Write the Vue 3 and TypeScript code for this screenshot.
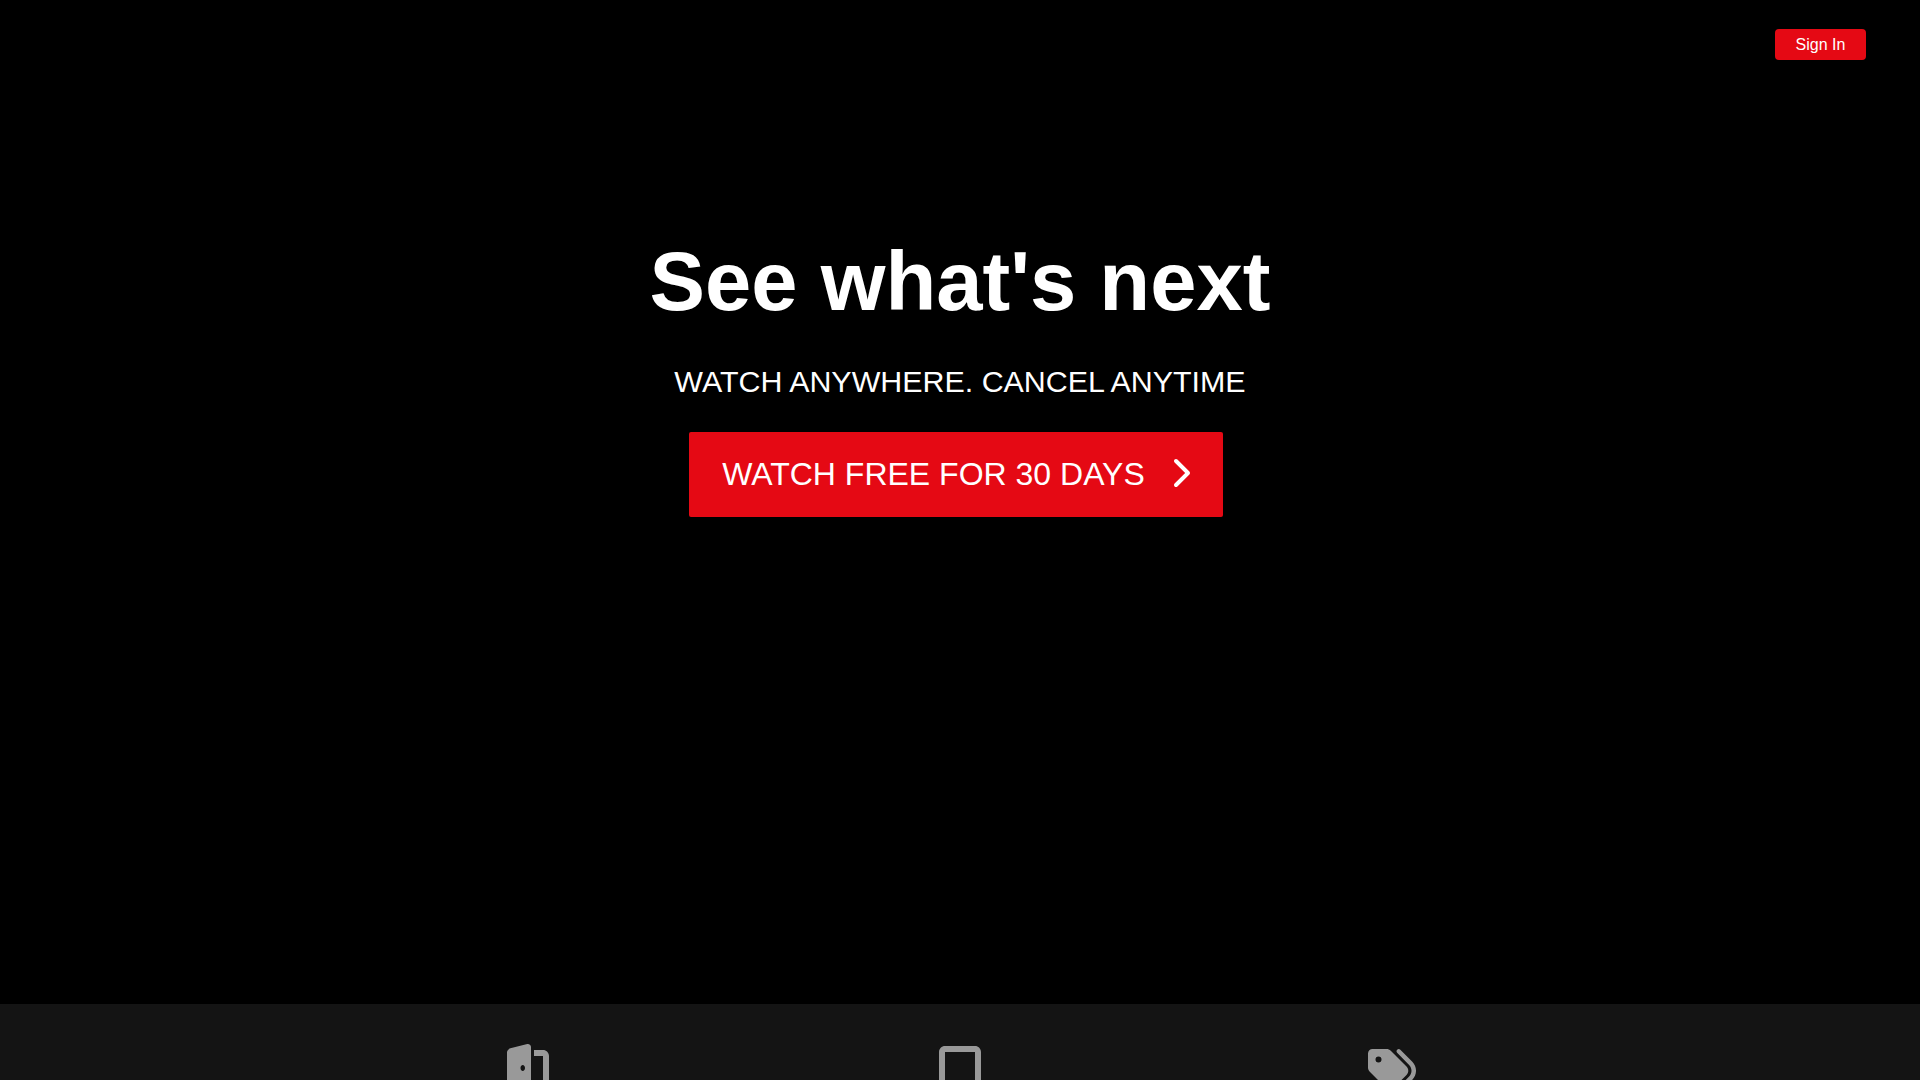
<template>
  <div class="page">
    <section class="showcase">
      <header class="topbar">
        <a class="btn-signin" href="#">Sign In</a>
      </header>
      <div class="hero">
        <h1 class="hero__title">See what's next</h1>
        <p class="hero__sub">WATCH ANYWHERE. CANCEL ANYTIME</p>
        <a class="btn-cta" href="#">
          WATCH FREE FOR 30 DAYS
          <svg class="btn-cta__icon" xmlns="http://www.w3.org/2000/svg" viewBox="0 0 320 512">
            <path fill="currentColor" d="M310.6 233.4c12.5 12.5 12.5 32.8 0 45.3l-192 192c-12.5 12.5-32.8 12.5-45.3 0s-12.5-32.8 0-45.3L242.7 256 73.4 86.6c-12.5-12.5-12.5-32.8 0-45.3s32.8-12.5 45.3 0l192 192z" />
          </svg>
        </a>
      </div>
    </section>

    <section class="tabs">
      <div class="tabs__row">
        <div v-for="tab in tabs" :key="tab.id" class="tabs__item">
          <svg class="tabs__icon" :class="`tabs__icon--${tab.id}`" xmlns="http://www.w3.org/2000/svg" :viewBox="tab.viewBox">
            <path fill="currentColor" :d="tab.path" />
          </svg>
        </div>
      </div>
    </section>
  </div>
</template>

<script setup lang="ts">
const tabs = [
  {
    id: 'door',
    viewBox: '0 0 576 512',
    path: 'M320 32c0-9.9-4.5-19.2-12.3-25.2S289.8-1.4 280.2 1l-179.9 45C79 51.3 64 70.5 64 92.5V448H32c-17.7 0-32 14.3-32 32s14.3 32 32 32H96 288h32V480 32zM256 256c0 17.7-10.7 32-24 32s-24-14.3-24-32s10.7-32 24-32s24 14.3 24 32zm96-128h96V480c0 17.7 14.3 32 32 32h64c17.7 0 32-14.3 32-32s-14.3-32-32-32H512V128c0-35.3-28.7-64-64-64H352v64z',
  },
  {
    id: 'tablet',
    viewBox: '0 0 448 512',
    path: 'M0 64C0 28.7 28.7 0 64 0H384c35.3 0 64 28.7 64 64V448c0 35.3-28.7 64-64 64H64c-35.3 0-64-28.7-64-64V64zM256 448a32 32 0 1 0 -64 0 32 32 0 1 0 64 0zM384 64H64V384H384V64z',
  },
  {
    id: 'tags',
    viewBox: '0 0 512 512',
    path: 'M345 39.1L472.8 168.4c52.4 53 52.4 138.2 0 191.2L360.8 472.9c-9.3 9.4-24.5 9.5-33.9 .2s-9.5-24.5-.2-33.9L438.6 325.9c33.9-34.3 33.9-89.4 0-123.7L310.9 72.9c-9.3-9.4-9.2-24.6 .2-33.9s24.6-9.2 33.9 .2zM0 229.5V80C0 53.5 21.5 32 48 32H197.5c17 0 33.3 6.7 45.3 18.7l168 168c25 25 25 65.5 0 90.5L277.3 442.7c-25 25-65.5 25-90.5 0l-168-168C6.7 262.7 0 246.5 0 229.5zM144 144a32 32 0 1 0 -64 0 32 32 0 1 0 64 0z',
  },
];
</script>

<style>
html,
body {
  margin: 0;
  background: #000;
}
</style>

<style scoped>
.page {
  height: 100vh;
  overflow: hidden;
  background: #000;
  color: #fff;
  font-family: "Liberation Sans", Arial, sans-serif;
}

.showcase {
  height: 1004px;
  display: flex;
  flex-direction: column;
}

.topbar {
  display: flex;
  justify-content: flex-end;
  padding: 29px 54px 0 0;
}

.btn-signin {
  width: 91px;
  height: 31px;
  line-height: 31px;
  text-align: center;
  font-size: 16px;
  color: #fff;
  text-decoration: none;
  background: #e50914;
  border-radius: 4px;
}

.hero {
  display: flex;
  flex-direction: column;
  align-items: center;
  padding-top: 171px;
}

.hero__title {
  margin: 0;
  font-size: 83.2px;
  line-height: 102px;
  font-weight: 700;
}

.hero__sub {
  margin: 30px 0 0;
  font-size: 30.4px;
  line-height: 36px;
}

.btn-cta {
  display: flex;
  align-items: center;
  gap: 25px;
  margin: 33px 8px 0 0;
  padding: 0 33px;
  height: 85px;
  font-size: 32px;
  color: #fff;
  text-decoration: none;
  background: #e50914;
  border-radius: 2px;
}

.btn-cta__icon {
  width: 20px;
  height: 32px;
  margin-top: -4px;
}

.tabs {
  background: #141414;
  height: 300px;
}

.tabs__row {
  display: grid;
  grid-template-columns: repeat(3, 432px);
  justify-content: center;
  padding-top: 42px;
}

.tabs__item {
  display: flex;
  justify-content: center;
}

.tabs__icon {
  height: 48px;
  color: #999;
}

.tabs__icon--door {
  width: 54px;
  margin-top: -2px;
}

.tabs__icon--tablet {
  width: 42px;
}

.tabs__icon--tags {
  width: 48px;
}
</style>
